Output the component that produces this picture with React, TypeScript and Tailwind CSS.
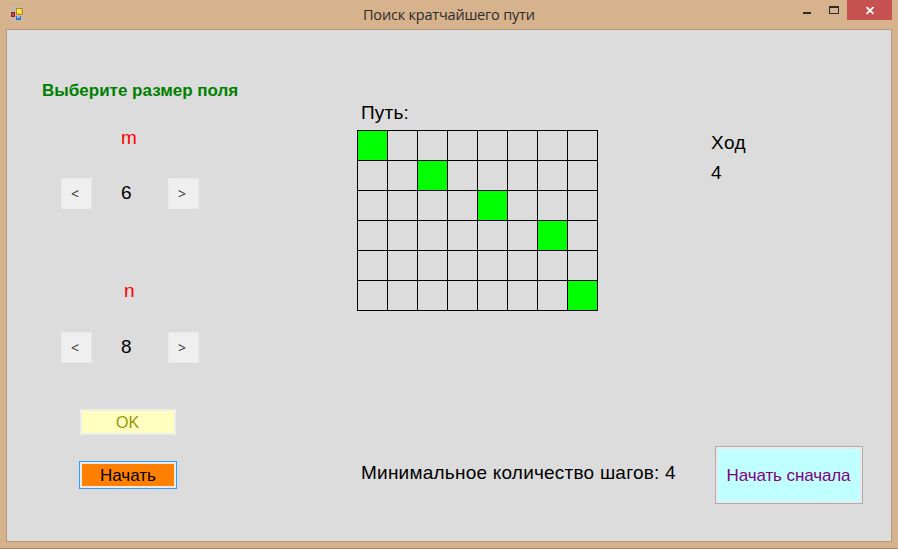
import React from "react";

const path = new Set(["0-0", "1-2", "2-4", "3-6", "5-7"]);

function Spinner({ value }: { value: number }) {
  const btn =
    "h-[31px] w-[31px] shrink-0 bg-[#efefef] border border-[#e9e9e9] pr-[3px] text-center font-['Open_Sans',sans-serif] text-[14px] leading-[28px] text-[#333]";
  return (
    <div className="flex h-[31px] w-[138px] items-start">
      <button className={btn}>&lt;</button>
      <span className="ml-[29px] mt-[5px] w-[47px] text-[19px] leading-5">{value}</span>
      <button className={btn}>&gt;</button>
    </div>
  );
}

function TitleBar() {
  return (
    <header className="flex h-[29px] items-start">
      <svg className="ml-[10px] mt-[7px] h-[14px] w-[14px] shrink-0" viewBox="0 0 14 14" shapeRendering="crispEdges">
        <path d="M0.5 0.5h13v13h-13z" fill="#d0b79c" stroke="#c1bcb8" />
        <path d="M5.5 1v12M1 4.5h4M1 10.5h4M6 8.500h7" stroke="#c1bcb8" />
        <path d="M6 1h7v7H6z" fill="#b18a10" />
        <path d="M7 2h5v5H7z" fill="#ffd02f" />
        <path d="M7 2h3v3H7z" fill="#ffea80" />
        <path d="M1 5h4v5H1z" fill="#9c1717" />
        <path d="M2 6h2v3H2z" fill="#d84a3b" />
        <path d="M6 9h5v4H6z" fill="#3c6fc4" />
        <path d="M7 9h3v2H7z" fill="#90bdf5" />
      </svg>
      <h1 className="ml-[339px] mt-[5px] w-[440px] whitespace-nowrap font-['Open_Sans',sans-serif] text-[14.5px] leading-5 tracking-[-0.2px] text-[#2b2b2b]">
        Поиск кратчайшего пути
      </h1>
      <svg className="h-5 w-[44px] shrink-0" viewBox="803 0 44 20" shapeRendering="crispEdges">
        <path d="M803 12h8v2h-8z" fill="#2b2b2b" />
        <path d="M829 6h10v8h-10zM830 8v5h8V8z" fill="#2b2b2b" fillRule="evenodd" />
      </svg>
      <button className="h-5 w-[45px] shrink-0 bg-[#c75050]">
        <svg className="h-5 w-[45px]" viewBox="0 0 45 20">
          <path d="M19.500 7.200l7 6.600M26.500 7.200l-7 6.600" stroke="#fff" strokeWidth="1.8" />
        </svg>
      </button>
    </header>
  );
}

export default function App() {
  return (
    <div className="h-[549px] w-[898px] overflow-hidden border-b border-[#a58469] bg-[#d6b28d] font-['Liberation_Sans',sans-serif] text-black">
      <TitleBar />
      <main className="ml-[6px] flex h-[513px] w-[886px] border border-[#b5967a] bg-[#dcdcdc] text-[19px] leading-5">
        <section className="flex w-[350px] flex-col items-start whitespace-nowrap">
          <h2 className="ml-[35px] mt-[51px] text-[17px] font-bold leading-5 text-[#008000]">Выберите размер поля</h2>
          <div className="ml-[114px] mt-[27px] text-[#f00]">m</div>
          <div className="ml-[54px] mt-[30px]">
            <Spinner value={6} />
          </div>
          <div className="ml-[117px] mt-[72px] text-[#f00]">n</div>
          <div className="ml-[54px] mt-[31px]">
            <Spinner value={8} />
          </div>
          <button className="ml-[73px] mt-[46px] h-[26px] w-[96px] border-2 border-[#ededed] bg-[#ffffc0] pr-px pt-px text-[16px] leading-[21px] text-[#96960b]">
            OK
          </button>
          <div className="ml-[72px] mt-[26px] border border-[#3399ff]">
            <button className="block h-[26px] w-[96px] border-2 border-[#ebebeb] bg-[#ff8000] pt-[2px] text-[17px] leading-[20px]">
              Начать
            </button>
          </div>
        </section>

        <section className="flex w-[354px] flex-col items-start whitespace-nowrap">
          <div className="ml-[4px] mt-[73px] tracking-[0.2px]">Путь:</div>
          <div className="mt-[7px] grid grid-cols-[repeat(8,30px)] border-l border-t border-black">
            {Array.from({ length: 48 }, (_, i) => {
              const key = `${Math.floor(i / 8)}-${i % 8}`;
              return (
                <div
                  key={key}
                  className={`h-[30px] border-b border-r border-black ${path.has(key) ? "bg-[#00ff00]" : ""}`}
                />
              );
            })}
          </div>
          <div className="ml-[4px] mt-[152px] tracking-[0.22px]">Минимальное количество шагов: 4</div>
        </section>

        <section className="flex flex-col items-start whitespace-nowrap">
          <div className="mt-[103px] tracking-[0.5px]">Ход</div>
          <div className="mt-[10px]">4</div>
          <div className="ml-[4px] mt-[263px] border border-[#adadad]">
            <button className="block h-[56px] w-[146px] border-2 border-[#e9e9e9] bg-[#c0ffff] pr-px pt-[2px] text-[17px] leading-[50px] tracking-[-0.1px] text-[#800080]">
              Начать сначала
            </button>
          </div>
        </section>
      </main>
    </div>
  );
}
